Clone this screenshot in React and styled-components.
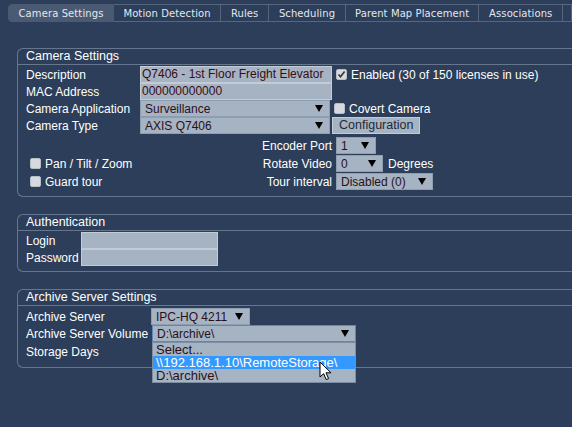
import styled, { createGlobalStyle } from 'styled-components';

const GlobalStyle = createGlobalStyle`
  html, body {
    margin: 0;
    padding: 0;
    background: #2c3e59;
    overflow: hidden;
  }
  body {
    font-family: "Liberation Sans", Arial, sans-serif;
    font-size: 12px;
    color: #ffffff;
  }
`;

const tabs = ['Camera Settings', 'Motion Detection', 'Rules', 'Scheduling', 'Parent Map Placement', 'Associations', ''];

function Caret() {
  return (
    <svg width="8" height="7" viewBox="0 0 8 7">
      <path d="M0 0h8L4 7z" fill="#000" />
    </svg>
  );
}

function Select({ value, width, focused }) {
  return (
    <SelectBox $width={width} $focused={focused}>
      <span>{value}</span>
      <Caret />
    </SelectBox>
  );
}

function Check({ checked }) {
  return (
    <CheckBox>
      {checked && (
        <svg width="9" height="9" viewBox="0 0 9 9">
          <path d="M1.5 4.5l2 2.2L7.6 1.6" fill="none" stroke="#333" strokeWidth="1.6" />
        </svg>
      )}
    </CheckBox>
  );
}

export default function App() {
  return (
    <Page>
      <GlobalStyle />
      <TabBar>
        {tabs.map((t, i) => (
          <Tab key={i} $active={i === 0}>{t}</Tab>
        ))}
      </TabBar>

      <Group>
        <Legend>Camera Settings</Legend>
        <Row>
          <Label>Description</Label>
          <TextInput $width={192}>Q7406 - 1st Floor Freight Elevator</TextInput>
          <Inline><Check checked />Enabled (30 of 150 licenses in use)</Inline>
        </Row>
        <Row>
          <Label>MAC Address</Label>
          <TextInput $width={192}>000000000000</TextInput>
        </Row>
        <Row>
          <Label>Camera Application</Label>
          <Select value="Surveillance" width={190} />
          <Inline><Check />Covert Camera</Inline>
        </Row>
        <Row>
          <Label>Camera Type</Label>
          <Select value="AXIS Q7406" width={190} />
          <Button>Configuration</Button>
        </Row>

        <Options>
          <OptRow>
            <Side />
            <RightLabel>Encoder Port</RightLabel>
            <Select value="1" width={40} />
          </OptRow>
          <OptRow>
            <Side><Check />Pan / Tilt / Zoom</Side>
            <RightLabel>Rotate Video</RightLabel>
            <Select value="0" width={47} />
            <Unit>Degrees</Unit>
          </OptRow>
          <OptRow>
            <Side><Check />Guard tour</Side>
            <RightLabel>Tour interval</RightLabel>
            <Select value="Disabled (0)" width={97} />
          </OptRow>
        </Options>
      </Group>

      <Group $pad={5}>
        <Legend>Authentication</Legend>
        <Row>
          <Label $width={55}>Login</Label>
          <TextInput $width={137} />
        </Row>
        <Row>
          <Label $width={55}>Password</Label>
          <TextInput $width={137} />
        </Row>
      </Group>

      <Group>
        <Legend $gap={2}>Archive Server Settings</Legend>
        <Row>
          <Label $width={125}>Archive Server</Label>
          <Select value="IPC-HQ 4211" width={99} />
        </Row>
        <Row>
          <Label $width={125}>Archive Server Volume</Label>
          <VolumeWrap>
            <Select value="D:\archive\" width={204} focused />
            <DropList>
              <DropItem>Select...</DropItem>
              <DropItem $hot>\\192.168.1.10\RemoteStorage\</DropItem>
              <DropItem>D:\archive\</DropItem>
              <Pointer width="13" height="20" viewBox="0 0 13 20">
                <path d="M1 1v15l3.6-3.4 2.6 6 2.4-1-2.6-5.8H12z" fill="#fff" stroke="#000" strokeWidth="1" strokeLinejoin="round" />
              </Pointer>
            </DropList>
          </VolumeWrap>
        </Row>
        <Row $height={19}>
          <Label $width={125}>Storage Days</Label>
        </Row>
      </Group>
    </Page>
  );
}

const Page = styled.div`
  padding-top: 4px;
`;

const TabBar = styled.div`
  display: flex;
  padding-left: 8px;
  height: 18px;
  margin-bottom: 26px;
`;

const Tab = styled.div`
  display: flex;
  align-items: center;
  padding: 0 10px;
  min-width: ${(p) => (p.$active ? '84px' : '0')};
  justify-content: center;
  font-family: "DejaVu Sans", Verdana, sans-serif;
  font-size: 10px;
  letter-spacing: 0.1px;
  color: #e3e8ef;
  white-space: nowrap;
  background: ${(p) => (p.$active ? '#4a5a72' : 'transparent')};
  border: 1px solid ${(p) => (p.$active ? '#4a5a72' : '#56667d')};
  border-left: ${(p) => (p.$active ? '1px solid #4a5a72' : 'none')};
  border-radius: ${(p) => (p.$active ? '4px 0 0 4px' : '0')};
  &:last-child {
    padding: 0 4px;
  }
`;

const Group = styled.div`
  margin: 0 0 17px 17px;
  width: 600px;
  border: 1px solid #66768c;
  border-right: none;
  border-radius: 6px 0 0 6px;
  padding-bottom: ${(p) => (p.$pad ?? 6)}px;
`;

const Legend = styled.div`
  height: 15px;
  line-height: 15px;
  padding-left: 8px;
  font-size: 12.5px;
  border-bottom: 1px solid #66768c;
  margin-bottom: ${(p) => (p.$gap ?? 1)}px;
`;

const Row = styled.div`
  display: flex;
  align-items: center;
  height: ${(p) => (p.$height || 17)}px;
  padding-left: 8px;
`;

const Label = styled.div`
  width: ${(p) => (p.$width || 114)}px;
  flex-shrink: 0;
  white-space: nowrap;
`;

const TextInput = styled.div`
  box-sizing: border-box;
  width: ${(p) => p.$width}px;
  height: 17px;
  line-height: 15px;
  padding-left: 1px;
  background: #a5b3c3;
  border: 1px solid #c3ccd6;
  color: #3a0c14;
  white-space: nowrap;
  overflow: hidden;
`;

const SelectBox = styled.div`
  box-sizing: border-box;
  display: flex;
  align-items: center;
  justify-content: space-between;
  width: ${(p) => p.$width}px;
  height: 17px;
  padding: 0 6px 0 4px;
  background: #a5b3c3;
  border: 1px solid ${(p) => (p.$focused ? '#5b86c8' : '#8e9db0')};
  color: #2a1018;
  white-space: nowrap;
`;

const Inline = styled.div`
  display: flex;
  align-items: center;
  gap: 4px;
  margin-left: 4px;
  white-space: nowrap;
`;

const CheckBox = styled.span`
  box-sizing: border-box;
  display: inline-flex;
  align-items: center;
  justify-content: center;
  width: 11px;
  height: 11px;
  background: #d6d9de;
  border: 1px solid #b8bec6;
  border-radius: 2px;
`;

const Button = styled.div`
  box-sizing: border-box;
  height: 17px;
  line-height: 15px;
  margin-left: 2px;
  padding: 0 6px;
  font-size: 12.5px;
  background: #a5b3c3;
  border: 1px solid #c3ccd6;
  color: #1e2a36;
`;

const Options = styled.div`
  display: flex;
  flex-direction: column;
  gap: 1px;
  margin-top: 3px;
`;

const OptRow = styled.div`
  display: flex;
  align-items: center;
  height: 17px;
`;

const Side = styled.div`
  display: flex;
  align-items: center;
  gap: 4px;
  width: 210px;
  padding-left: 12px;
  white-space: nowrap;
`;

const RightLabel = styled.div`
  width: 92px;
  text-align: right;
  padding-right: 4px;
  white-space: nowrap;
`;

const Unit = styled.div`
  margin-left: 5px;
`;

const VolumeWrap = styled.div`
  position: relative;
  margin-left: 1px;
`;

const DropList = styled.div`
  position: absolute;
  top: 17px;
  left: 0;
  width: 204px;
  box-sizing: border-box;
  background: #a5b3c3;
  border: 1px solid #7d8ea4;
  z-index: 5;
`;

const DropItem = styled.div`
  height: 13px;
  line-height: 13px;
  padding-left: 3px;
  font-size: 13px;
  background: ${(p) => (p.$hot ? '#3399ff' : 'transparent')};
  color: ${(p) => (p.$hot ? '#ffffff' : '#2a1018')};
  white-space: nowrap;
`;

const Pointer = styled.svg`
  position: absolute;
  left: 166px;
  top: 18px;
`;
